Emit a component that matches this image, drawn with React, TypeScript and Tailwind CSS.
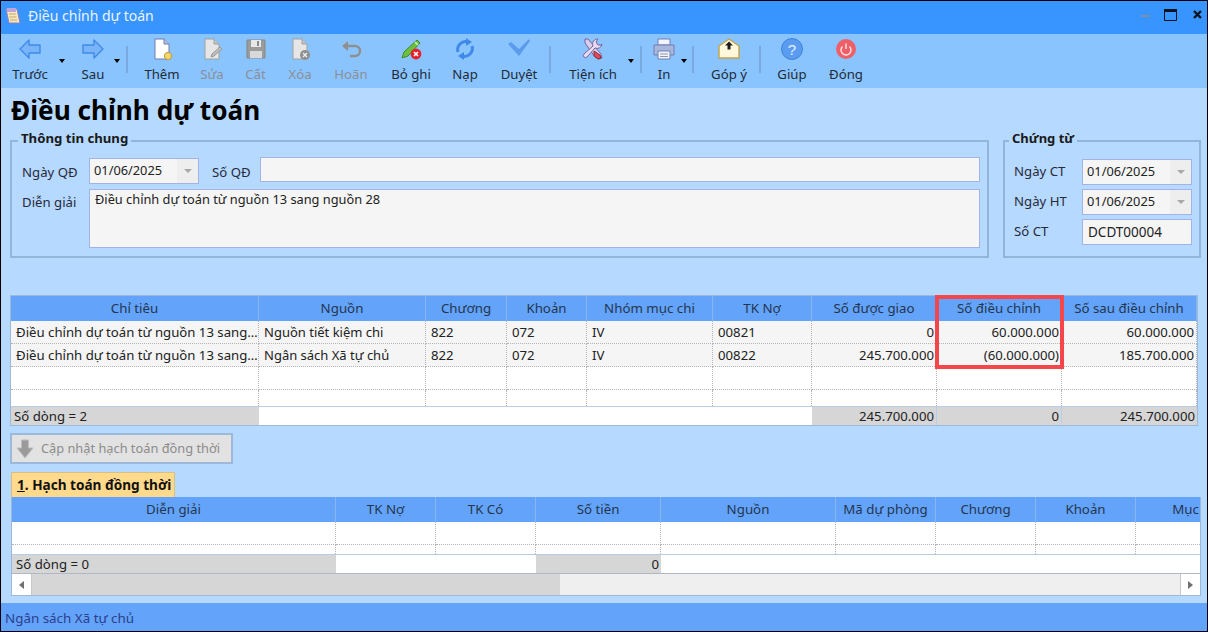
import React from "react";

const Icons: Record<string, React.ReactNode> = {
  left: <path d="M11 3 2 12l9 9v-5h11V8H11z" fill="#7ab4f8" stroke="#3f8ae8" strokeWidth="1.4" strokeLinejoin="round" />,
  right: <path d="M13 3l9 9-9 9v-5H2V8h11z" fill="#7ab4f8" stroke="#3f8ae8" strokeWidth="1.4" strokeLinejoin="round" />,
  them: (
    <>
      <path d="M5 2h9l5 5v15H5z" fill="#fff" stroke="#6f7fb0" />
      <path d="M14 2v5h5" fill="#b8c4de" stroke="#6f7fb0" />
      <circle cx="18" cy="19" r="3.6" fill="#f5d66c" stroke="#c09a30" />
    </>
  ),
  sua: (
    <>
      <path d="M5 2h9l5 5v15H5z" fill="#e6e6e6" stroke="#a0a0a0" />
      <path d="M14 2v5h5" fill="#c4c4c4" stroke="#a0a0a0" />
      <path d="M11 20l1-3 8-7 2 2-8 7z" fill="#bdbdbd" stroke="#9a9a9a" />
    </>
  ),
  cat: (
    <>
      <path d="M3 3h18v18H3z" fill="#9b9b9b" stroke="#858585" />
      <path d="M7 3h10v7H7z" fill="#e8e8e8" />
      <path d="M6 14h12v7H6z" fill="#d8d8d8" />
      <path d="M13 4h2v5h-2z" fill="#8a8a8a" />
    </>
  ),
  xoa: (
    <>
      <path d="M5 2h9l5 5v15H5z" fill="#e6e6e6" stroke="#a0a0a0" />
      <path d="M14 2v5h5" fill="#c4c4c4" stroke="#a0a0a0" />
      <circle cx="17" cy="18" r="5" fill="#8f8f8f" />
      <path d="M15 16l4 4m0-4-4 4" stroke="#eee" strokeWidth="1.4" />
    </>
  ),
  hoan: (
    <>
      <path d="M6 9h10a5 5 0 0 1 0 10h-5" fill="none" stroke="#8f8f8f" strokeWidth="2.4" />
      <path d="M9 4 3 9l6 5z" fill="#8f8f8f" />
    </>
  ),
  boghi: (
    <>
      <path d="M3 21l2-6L18 3l3 3L9 19z" fill="#6fbf3f" stroke="#3f8a2a" />
      <path d="M16 5l3 3" stroke="#d8f0b0" strokeWidth="1.5" />
      <circle cx="17" cy="17" r="5.400" fill="#e8202c" />
      <path d="M15 15l4 4m0-4-4 4" stroke="#fff" strokeWidth="1.6" />
    </>
  ),
  nap: (
    <>
      <path d="M5 15a8 8 0 0 1 10-10" fill="none" stroke="#3f8ae8" strokeWidth="3" />
      <path d="M19 9a8 8 0 0 1-10 10" fill="none" stroke="#3f8ae8" strokeWidth="3" />
      <path d="M13 1l6 4-6 4z" fill="#3f8ae8" />
      <path d="M11 15l-6 4 6 4z" fill="#3f8ae8" />
    </>
  ),
  duyet: <path d="M1 7l3-2 8 7L22 2l1 2-11 15z" fill="#5b9bec" />,
  tien: (
    <>
      <path d="M4 2l3 0 13 15 1 4-3 1-4-2L4 6z" fill="#d8d0e8" stroke="#7a5f9e" />
      <path d="M13 14l6 4 1 3-3 1-4-3z" fill="#d94a5a" stroke="#8e2c3c" />
      <path d="M21 7a5 5 0 0 1-7 4L6 20a2 2 0 0 1-3-3l9-8a5 5 0 0 1 5-7l-2 3 2 3 3 0z" fill="#e6def0" stroke="#7a5f9e" />
    </>
  ),
  in: (
    <>
      <path d="M6 2h12v6H6z" fill="#f2f4fa" stroke="#6f7fb0" />
      <path d="M2 8h20v10H2z" fill="#a9b6dc" stroke="#6f7fb0" />
      <path d="M6 14h12v8H6z" fill="#f2f4fa" stroke="#6f7fb0" />
      <path d="M8 17h8M8 19.500h8" stroke="#8a96bc" />
    </>
  ),
  gop: (
    <>
      <path d="M2 9l10-7 10 7v12H2z" fill="#fff8dc" stroke="#c4a24a" strokeWidth="1.400" />
      <path d="M12 4.500l4 4h-2.500v4h-3v-4H8z" fill="#1c1c1c" />
    </>
  ),
  giup: (
    <>
      <circle cx="12" cy="12" r="10.500" fill="#5a9df0" stroke="#3f80d8" />
      <text x="12" y="17.500" textAnchor="middle" fontSize="15" fill="#e8f2ff" fontFamily="Liberation Sans, sans-serif">?</text>
    </>
  ),
  dong: (
    <>
      <circle cx="12" cy="12" r="10" fill="#ee6068" />
      <path d="M8.500 9.500a5 5 0 1 0 7 0" fill="none" stroke="#ffe4e4" strokeWidth="1.400" />
      <path d="M12 6.500v5.500" stroke="#ffe4e4" strokeWidth="1.400" />
    </>
  ),
};

function Tool({ w, icon, label, off }: { w: string; icon: string; label: string; off?: boolean }) {
  return (
    <div className={`${w} flex flex-col items-center pt-[3px] shrink-0`}>
      <svg width="24" height="24" viewBox="0 0 24 24">{Icons[icon]}</svg>
      <span className={`mt-[3px] text-[13.200px] leading-[20px] whitespace-nowrap ${off ? "text-[#8a8f98]" : "text-[#222a35]"}`}>{label}</span>
    </div>
  );
}

function Caret({ ml }: { ml: string }) {
  return (
    <div className={`${ml} w-[7px] shrink-0 pt-[25px]`}>
      <div className="w-0 h-0 border-x-[3.500px] border-x-transparent border-t-[4px] border-t-black" />
    </div>
  );
}

function Sep({ ml }: { ml: string }) {
  return <div className={`${ml} w-[2px] h-[27px] mt-[12px] bg-[#78a9e0] shrink-0`} />;
}

function DateBox({ w, value }: { w: string; value: string }) {
  return (
    <div className={`${w} h-[26px] flex items-center border border-[#a4b2ea] bg-[#f5f5f5] shrink-0`}>
      <span className="flex-1 pl-[4px] text-[12.800px] text-[#222]">{value}</span>
      <div className="w-[21px] h-full bg-[#eeeeee] flex items-center justify-center">
        <div className="w-0 h-0 border-x-[4px] border-x-transparent border-t-[4px] border-t-[#a8a8a8]" />
      </div>
    </div>
  );
}

const H1 = ["Chỉ tiêu", "Nguồn", "Chương", "Khoản", "Nhóm mục chi", "TK Nợ", "Số được giao", "Số điều chỉnh", "Số sau điều chỉnh"];
const R1 = [
  ["Điều chỉnh dự toán từ nguồn 13 sang…", "Nguồn tiết kiệm chi", "822", "072", "IV", "00821", "0", "60.000.000", "60.000.000"],
  ["Điều chỉnh dự toán từ nguồn 13 sang…", "Ngân sách Xã tự chủ", "822", "072", "IV", "00822", "245.700.000", "(60.000.000)", "185.700.000"],
];
const H2 = ["Diễn giải", "TK Nợ", "TK Có", "Số tiền", "Nguồn", "Mã dự phòng", "Chương", "Khoản", "Mục"];

const g1 = "grid grid-cols-[248px_167px_81px_80px_126px_99px_125px_125px_135px]";
const g2 = "grid grid-cols-[324px_100px_100px_125px_175px_100px_100px_100px_100px]";
const hc = "flex items-center justify-center border-r border-[#86b5f2] text-[13.300px] text-[#24364f] whitespace-nowrap";
const dc = "border-r border-b border-dotted border-[#b4b4b4]";

export default function App() {
  return (
    <div className="w-[1208px] h-[632px] border border-black flex flex-col overflow-hidden bg-[#b5d9ff] text-[13.200px] font-['Noto_Sans','Liberation_Sans',sans-serif]">
      {/* Title bar */}
      <div className="h-[33px] shrink-0 bg-[#3895ff] flex items-start pt-[5px] pl-[4px] pr-[4px]">
        <svg className="mt-[1px]" width="16" height="18" viewBox="0 0 16 18">
          <path d="M1 2h11l3 14H4z" fill="#f3e7c4" stroke="#8f80b8" />
          <path d="M2 1h9v4H2z" fill="#b9a6dc" />
          <path d="M4 7h7M4.500 10h7M5 13h7" stroke="#c9a860" />
        </svg>
        <span className="ml-[7px] text-[14px] leading-[20px] text-[#e8f3ff]">Điều chỉnh dự toán</span>
        <svg className="ml-auto mt-[2px]" width="62" height="14" viewBox="0 0 62 14">
          <path d="M0 8h9" stroke="#7a8fa8" strokeWidth="2" />
          <path d="M23.500 1.500h12v11h-12z" fill="none" stroke="#0a1420" />
          <path d="M23 1h13v3H23z" fill="#0a1420" />
          <path d="M53 3l7 7m0-7-7 7" stroke="#0a1420" strokeWidth="2.400" />
        </svg>
      </div>

      {/* Toolbar */}
      <div className="h-[54px] shrink-0 bg-[#8ac4ff] flex items-start">
        <Tool w="w-[58px]" icon="left" label="Trước" />
        <Caret ml="ml-0" />
        <div className="w-[6px] shrink-0" />
        <Tool w="w-[42px]" icon="right" label="Sau" />
        <Caret ml="ml-0" />
        <Sep ml="ml-[5px]" />
        <Tool w="w-[68px]" icon="them" label="Thêm" />
        <Tool w="w-[32px]" icon="sua" label="Sửa" off />
        <Tool w="w-[55px]" icon="cat" label="Cất" off />
        <Tool w="w-[34px]" icon="xoa" label="Xóa" off />
        <Tool w="w-[68px]" icon="hoan" label="Hoãn" off />
        <Tool w="w-[52px]" icon="boghi" label="Bỏ ghi" />
        <Tool w="w-[56px]" icon="nap" label="Nạp" />
        <Tool w="w-[52px]" icon="duyet" label="Duyệt" />
        <Sep ml="ml-[4px]" />
        <div className="w-[9px] shrink-0" />
        <Tool w="w-[66px]" icon="tien" label="Tiện ích" />
        <Caret ml="ml-[2px]" />
        <Sep ml="ml-[5px]" />
        <div className="w-[5px] shrink-0" />
        <Tool w="w-[34px]" icon="in" label="In" />
        <Caret ml="ml-0" />
        <Sep ml="ml-[4px]" />
        <div className="w-[6px] shrink-0" />
        <Tool w="w-[58px]" icon="gop" label="Góp ý" />
        <Sep ml="ml-[1px]" />
        <Tool w="w-[62px]" icon="giup" label="Giúp" />
        <Tool w="w-[46px]" icon="dong" label="Đóng" />
      </div>

      {/* Content */}
      <div className="flex-1 flex flex-col pl-[9px]">
        <div className="h-[52px] shrink-0 pl-[1px] pt-[2px] font-['Liberation_Sans',sans-serif] font-bold text-[26.200px] leading-[40px] text-black">
          Điều chỉnh dự toán
        </div>

        {/* Groups */}
        <div className="h-[118px] shrink-0 flex gap-[15px]">
          <div className="relative w-[979px] border-2 border-[#93b4dc] pl-[10px] pr-[7px] pt-[14px] flex flex-col gap-[5px]">
            <span className="absolute -top-[13px] left-[6px] px-[3px] bg-[#b5d9ff] font-bold text-[13.200px] leading-[18px] text-[#1a1a1a]">Thông tin chung</span>
            <div className="flex items-start">
              <span className="w-[67px] mt-[6px] leading-[20px] text-[#2a2a3a]">Ngày QĐ</span>
              <div className="mt-[2px]"><DateBox w="w-[110px]" value="01/06/2025" /></div>
              <span className="w-[48px] ml-[13px] mt-[6px] leading-[20px] text-[#2a2a3a] whitespace-nowrap">Số QĐ</span>
              <div className="flex-1 h-[25px] border border-[#a4b2ea] bg-[#f5f5f5] mt-[1px]" />
            </div>
            <div className="flex items-start">
              <span className="w-[67px] mt-[3px] leading-[20px] text-[#2a2a3a]">Diễn giải</span>
              <div className="flex-1 h-[59px] border border-[#a4b2ea] bg-[#f5f5f5] pl-[5px] text-[12.800px] leading-[19px] text-[#222]">Điều chỉnh dự toán từ nguồn 13 sang nguồn 28</div>
            </div>
          </div>
          <div className="relative w-[198px] -ml-[1px] border-2 border-[#93b4dc] pl-[9px] pt-[17px] flex flex-col gap-[4px]">
            <span className="absolute -top-[13px] left-[4px] px-[3px] bg-[#b5d9ff] font-bold text-[13px] leading-[18px] text-[#1a1a1a]">Chứng từ</span>
            <div className="flex items-center">
              <span className="w-[68px] text-[#2a2a3a]">Ngày CT</span>
              <DateBox w="w-[110px]" value="01/06/2025" />
            </div>
            <div className="flex items-center">
              <span className="w-[68px] text-[#2a2a3a]">Ngày HT</span>
              <DateBox w="w-[110px]" value="01/06/2025" />
            </div>
            <div className="flex items-center">
              <span className="w-[68px] text-[#2a2a3a]">Số CT</span>
              <div className="w-[110px] h-[26px] border border-[#a4b2ea] bg-[#f5f5f5] pl-[5px] leading-[24px] text-[13.500px] text-[#222]">DCDT00004</div>
            </div>
          </div>
        </div>

        {/* Table 1 */}
        <div className="relative mt-[37px] w-[1188px] h-[131px] shrink-0 border border-[#9db8d8] bg-white">
          <div className={`${g1} h-[25px] bg-[#63a3fa]`}>
            {H1.map((h) => <div key={h} className={hc}>{h}</div>)}
          </div>
          {R1.map((r, i) => (
            <div key={i} className={`${g1} h-[23px] bg-[#f5f5f5]`}>
              {r.map((c, j) => (
                <div key={j} className={`${dc} leading-[22px] whitespace-nowrap overflow-hidden ${j >= 6 ? "text-right pr-[2px]" : "pl-[5px]"} ${j === 1 ? "text-[13px]" : ""} text-[#222]`}>{c}</div>
              ))}
            </div>
          ))}
          <div className={`${g1} h-[23px]`}>
            {H1.map((h) => <div key={h} className={dc} />)}
          </div>
          <div className={`${g1} h-[16px]`}>
            {H1.map((h) => <div key={h} className="border-r border-dotted border-[#b4b4b4]" />)}
          </div>
          <div className={`${g1} h-[19px] border-t border-[#b9cde6] text-[#222] leading-[18px]`}>
            <div className="bg-[#d6d6d6] pl-[3px]">Số dòng = 2</div>
            <div className="col-span-5 bg-white" />
            <div className="bg-[#d6d6d6] text-right pr-[2px] border-r border-[#b9cde6]">245.700.000</div>
            <div className="bg-[#d6d6d6] text-right pr-[2px] border-r border-[#b9cde6]">0</div>
            <div className="bg-[#d6d6d6] text-right pr-[2px]">245.700.000</div>
          </div>
          <div className="absolute left-[924px] -top-[1px] w-[129px] h-[74px] border-[4px] border-[#f5474b]" />
        </div>

        {/* Update button */}
        <div className="mt-[7px] w-[223px] h-[31px] shrink-0 flex items-center border-2 border-[#9db8d8] bg-[#e2e2e2]">
          <svg className="ml-[3px] shrink-0" width="20" height="20" viewBox="0 0 20 20">
            <path d="M6.500 1h7v8H18l-8 10-8-10h4.500z" fill="#9a9a9a" stroke="#bdbdbd" />
          </svg>
          <span className="ml-[6px] text-[12.800px] text-[#8c8c8c] whitespace-nowrap">Cập nhật hạch toán đồng thời</span>
        </div>

        {/* Tab */}
        <div className="mt-[8px] ml-[1px] w-[164px] h-[25px] shrink-0 bg-[#ffd98c] border border-[#d8c080] border-b-0 pl-[5px] font-bold text-[13.600px] text-[#111] leading-[24px] whitespace-nowrap">
          <span className="underline">1</span>. Hạch toán đồng thời
        </div>

        {/* Table 2 */}
        <div className="ml-[1px] w-[1190px] h-[99px] shrink-0 border border-[#9db8d8] border-t-0 overflow-hidden bg-white flex flex-col">
          <div className={`${g2} h-[25px] bg-[#63a3fa] shrink-0`}>
            {H2.map((h) => <div key={h} className={hc}>{h}</div>)}
          </div>
          <div className={`${g2} h-[23px] shrink-0`}>
            {H2.map((h) => <div key={h} className={dc} />)}
          </div>
          <div className={`${g2} h-[9px] shrink-0`}>
            {H2.map((h) => <div key={h} className="border-r border-dotted border-[#b4b4b4]" />)}
          </div>
          <div className={`${g2} h-[19px] shrink-0 border-t border-[#b9cde6] text-[#222] leading-[18px]`}>
            <div className="bg-[#d6d6d6] pl-[4px]">Số dòng = 0</div>
            <div className="col-span-2 bg-white" />
            <div className="bg-[#d6d6d6] text-right pr-[2px]">0</div>
            <div className="col-span-5 bg-white" />
          </div>
          <div className="flex-1 flex border-t border-[#b0b8c4] bg-[#efefef]">
            <div className="w-[20px] flex items-center justify-center bg-white border-r border-[#c8c8c8]">
              <div className="w-0 h-0 border-y-[4px] border-y-transparent border-r-[5px] border-r-[#707070]" />
            </div>
            <div className="w-[528px] bg-[#d6d6d6]" />
            <div className="flex-1" />
            <div className="w-[20px] flex items-center justify-center bg-white border-l border-[#c8c8c8]">
              <div className="w-0 h-0 border-y-[4px] border-y-transparent border-l-[5px] border-l-[#707070]" />
            </div>
          </div>
        </div>
      </div>

      {/* Status */}
      <div className="h-[28px] shrink-0 bg-[#63a3fa] pl-[4px] pt-[3px] flex items-center text-[13.400px] text-[#2a3f8c]">Ngân sách Xã tự chủ</div>
    </div>
  );
}
